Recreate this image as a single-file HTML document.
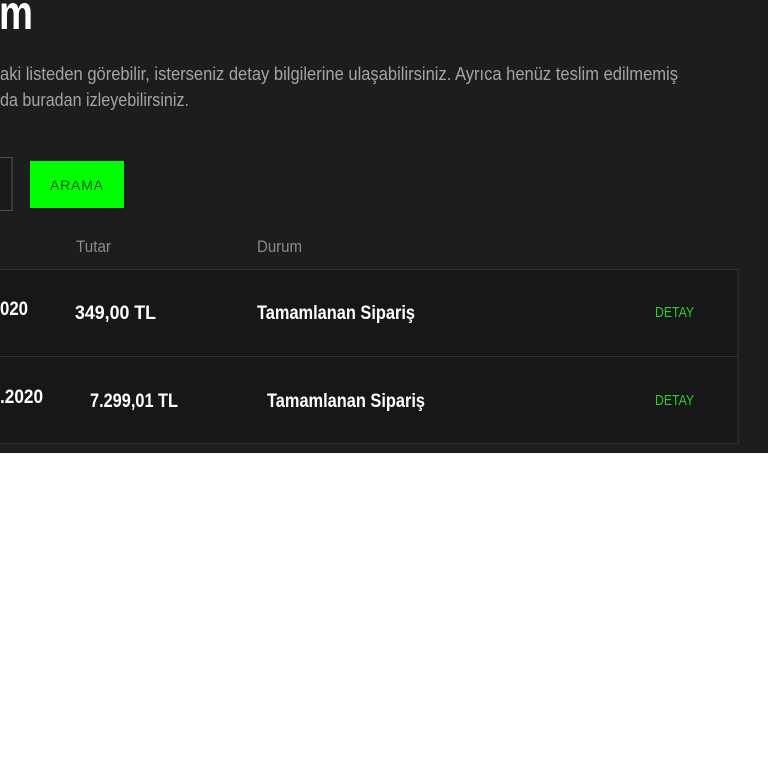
<!DOCTYPE html>
<html><head><meta charset="utf-8"><style>
html,body{margin:0;padding:0;background:#fff;width:768px;height:768px;overflow:hidden}
svg{display:block}
text{font-family:"Liberation Sans",sans-serif}
</style></head><body>
<svg width="768" height="768" viewBox="0 0 768 768" xmlns="http://www.w3.org/2000/svg">
<rect x="0" y="0" width="768" height="453" fill="#1c1d1f"/>
<text x="-1" y="29" font-size="48" font-weight="bold" fill="#fff" textLength="34" lengthAdjust="spacingAndGlyphs">m</text>
<text x="0" y="80" font-size="18" fill="#a3a3a3" textLength="678" lengthAdjust="spacingAndGlyphs">aki listeden görebilir, isterseniz detay bilgilerine ulaşabilirsiniz. Ayrıca henüz teslim edilmemiş</text>
<text x="0" y="106" font-size="18" fill="#a3a3a3" textLength="189" lengthAdjust="spacingAndGlyphs">da buradan izleyebilirsiniz.</text>
<rect x="-10" y="157.5" width="22" height="53" fill="#1a1a1a" stroke="#555" stroke-width="1"/>
<rect x="30" y="161" width="94" height="47" fill="#00ff00"/>
<text x="50" y="190" font-size="14" fill="#0b5e0b" textLength="53" lengthAdjust="spacing">ARAMA</text>
<text x="76" y="252" font-size="17" fill="#8a8a8a" textLength="35" lengthAdjust="spacingAndGlyphs">Tutar</text>
<text x="257" y="252" font-size="17" fill="#8a8a8a" textLength="45" lengthAdjust="spacingAndGlyphs">Durum</text>
<rect x="-5" y="269.5" width="743" height="87" fill="#171719" stroke="#333" stroke-width="1"/>
<rect x="-5" y="356.5" width="743" height="87" fill="#171719" stroke="#333" stroke-width="1"/>
<text x="0" y="315" font-size="19" font-weight="bold" fill="#fff" textLength="28" lengthAdjust="spacingAndGlyphs">020</text>
<text x="75" y="319" font-size="19" font-weight="bold" fill="#fff" textLength="81" lengthAdjust="spacingAndGlyphs">349,00 TL</text>
<text x="257" y="319" font-size="19" font-weight="bold" fill="#fff" textLength="158" lengthAdjust="spacingAndGlyphs">Tamamlanan Sipariş</text>
<text x="655" y="317" font-size="15" fill="#2ccc2c" textLength="39" lengthAdjust="spacingAndGlyphs">DETAY</text>
<text x="0" y="403" font-size="19" font-weight="bold" fill="#fff" textLength="43" lengthAdjust="spacingAndGlyphs">.2020</text>
<text x="90" y="407" font-size="19" font-weight="bold" fill="#fff" textLength="88" lengthAdjust="spacingAndGlyphs">7.299,01 TL</text>
<text x="267" y="407" font-size="19" font-weight="bold" fill="#fff" textLength="158" lengthAdjust="spacingAndGlyphs">Tamamlanan Sipariş</text>
<text x="655" y="405" font-size="15" fill="#2ccc2c" textLength="39" lengthAdjust="spacingAndGlyphs">DETAY</text>
</svg>
</body></html>
